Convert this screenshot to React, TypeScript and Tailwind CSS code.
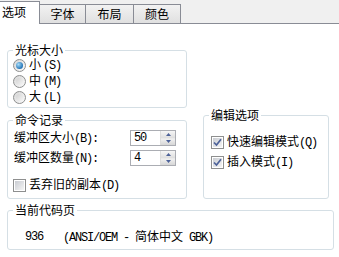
import React from "react";

function L({ children }: { children: React.ReactNode }) {
  return (
    <span className="font-['Liberation_Mono',monospace] text-[12px] tracking-[-1.2px]">
      {children}
    </span>
  );
}

function Group({
  title,
  className,
  children,
}: {
  title: string;
  className?: string;
  children: React.ReactNode;
}) {
  return (
    <fieldset className={`m-0 min-w-0 rounded-[3px] border border-[#d5dfe5] p-0 ${className ?? ""}`}>
      <legend className="ml-[5px] px-[2px] text-[12px] leading-[14px]">{title}</legend>
      {children}
    </fieldset>
  );
}

function Radio({ checked }: { checked?: boolean }) {
  return (
    <span className="flex h-[13px] w-[13px] shrink-0 items-center justify-center rounded-full border border-[#8e8f8f] bg-gradient-to-br from-[#d6d6d6] to-[#fbfbfb]">
      <span
        className={
          checked
            ? "h-[7px] w-[7px] rounded-full bg-[radial-gradient(circle_at_35%_35%,#a6dcf8,#1b6db3_75%)]"
            : "h-[7px] w-[7px] rounded-full bg-gradient-to-br from-[#d2d2d2] to-[#f5f5f5]"
        }
      />
    </span>
  );
}

function Check({ checked }: { checked?: boolean }) {
  return (
    <span className="flex h-[13px] w-[13px] shrink-0 border border-[#8e8f8f] bg-white p-[1px]">
      <span className="flex h-full w-full items-center justify-center bg-gradient-to-br from-[#c9ccd2] to-[#f5f5f5]">
        {checked && (
          <svg width="9" height="9" viewBox="0 0 9 9">
            <path d="M1 4.5 L3.5 7 L8 1.2" stroke="#4d6299" strokeWidth="1.7" fill="none" />
          </svg>
        )}
      </span>
    </span>
  );
}

function Spin({ value }: { value: string }) {
  return (
    <div className="flex h-[16px] w-[46px] border border-[#abadb3] bg-white">
      <span className="flex flex-1 items-center pl-[3px] leading-none">
        <L>{value}</L>
      </span>
      <div className="flex w-[15px] flex-col border-l border-[#dcdcdc]">
        <span className="flex flex-1 items-center justify-center border-b border-[#eaeaea] bg-gradient-to-b from-[#f6f6f6] to-[#dedede]">
          <svg width="5" height="3" viewBox="0 0 5 3">
            <path d="M0 3 L2.5 0 L5 3 Z" fill="#4d6299" />
          </svg>
        </span>
        <span className="flex flex-1 items-center justify-center bg-gradient-to-b from-[#f0f0f0] to-[#d6d6d6]">
          <svg width="5" height="3" viewBox="0 0 5 3">
            <path d="M0 0 L5 0 L2.5 3 Z" fill="#4d6299" />
          </svg>
        </span>
      </div>
    </div>
  );
}

export default function App() {
  const tabs = [
    { label: "字体", w: "w-[46px]" },
    { label: "布局", w: "w-[48px]" },
    { label: "颜色", w: "w-[47px]" },
  ];
  return (
    <div className="h-[257px] w-[339px] overflow-hidden bg-white font-['Noto_Sans_CJK_SC',sans-serif] text-[12px] leading-[14px] text-black">
      <div className="flex h-[24px] items-end border-b border-[#898c95] bg-[#f0f0f0]">
        <div className="relative -mb-px flex h-[23px] w-[40px] items-center border-t border-r border-[#898c95] bg-white pl-[2px] pb-[2px]">
          选项
        </div>
        {tabs.map((t) => (
          <div
            key={t.label}
            className={`flex h-[19px] ${t.w} items-center justify-center border-t border-r border-[#898c95] bg-gradient-to-b from-[#f2f2f2] to-[#e0e0e0]`}
          >
            {t.label}
          </div>
        ))}
      </div>

      <div className="px-[7px]">
        <Group title="光标大小" className="mt-[19px] w-[180px] pb-[2px]">
          {[
            ["小", "(S)", true],
            ["中", "(M)", false],
            ["大", "(L)", false],
          ].map(([c, k, on]) => (
            <div key={c as string} className="flex h-[16px] items-center gap-[3px] pl-[5px]">
              <Radio checked={on as boolean} />
              <span>
                {c}
                <span className="ml-[2px]">
                  <L>{k}</L>
                </span>
              </span>
            </div>
          ))}
        </Group>

        <div className="flex items-end gap-[16px]">
          <Group title="命令记录" className="w-[180px] pb-[5px]">
            <div className="mt-[3px] flex h-[16px] items-center justify-between pr-[10px] pl-[6px]">
              <span>
                缓冲区大小<L>(B):</L>
              </span>
              <Spin value="50" />
            </div>
            <div className="mt-[4px] flex h-[16px] items-center justify-between pr-[10px] pl-[6px]">
              <span>
                缓冲区数量<L>(N):</L>
              </span>
              <Spin value="4" />
            </div>
            <div className="mt-[11px] flex h-[16px] items-center gap-[3px] pl-[5px]">
              <Check />
              <span>
                丢弃旧的副本<L>(D)</L>
              </span>
            </div>
          </Group>

          <Group title="编辑选项" className="h-[91px] w-[126px]">
            <div className="mt-[12px] flex h-[16px] items-center gap-[3px] pl-[7px]">
              <Check checked />
              <span>
                快速编辑模式<L>(Q)</L>
              </span>
            </div>
            <div className="mt-[4px] flex h-[16px] items-center gap-[3px] pl-[7px]">
              <Check checked />
              <span>
                插入模式<L>(I)</L>
              </span>
            </div>
          </Group>
        </div>

        <Group title="当前代码页" className="mt-[4px] w-[327px] pb-[4px]">
          <div className="mt-[12px] flex h-[16px] items-center pl-[17px]">
            <L>936</L>
            <span className="ml-[20px]">
              <L>(ANSI/OEM - </L>简体中文<L> GBK)</L>
            </span>
          </div>
        </Group>
      </div>
    </div>
  );
}
